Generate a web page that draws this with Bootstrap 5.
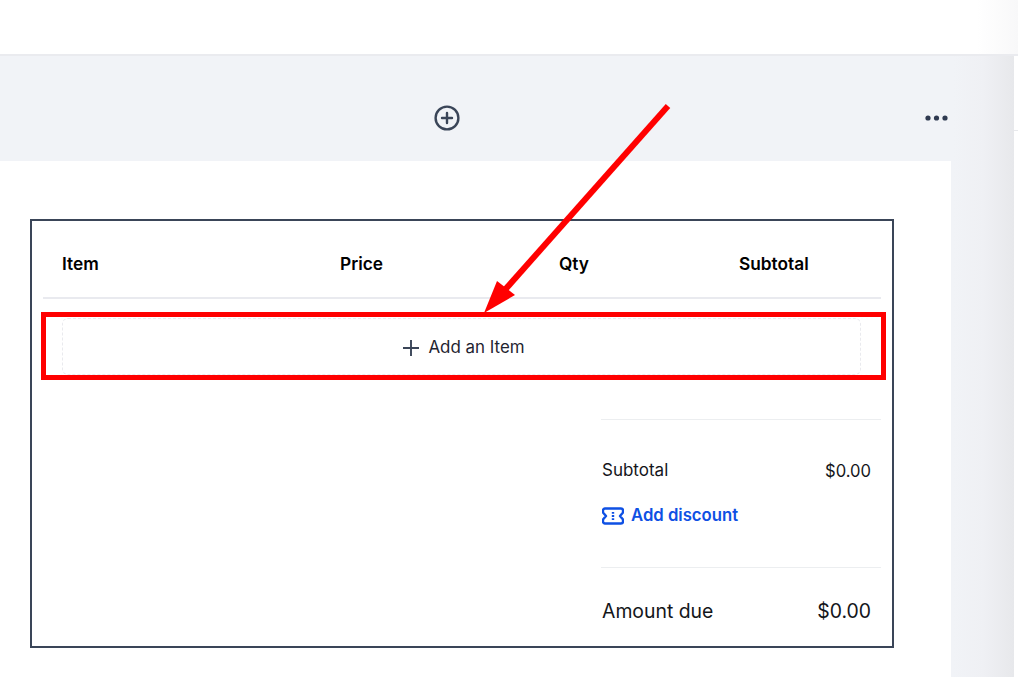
<!DOCTYPE html>
<html lang="en"><head><meta charset="utf-8"><title>Invoice</title>
<link href="https://cdn.jsdelivr.net/npm/bootstrap@5.3.0/dist/css/bootstrap.min.css" rel="stylesheet">
<style>
html,body{height:677px;overflow:hidden;background:#fff}
body{font-family:Inter,"Liberation Sans",sans-serif;color:#14161a;position:relative}
.topstrip{height:56px;background:linear-gradient(90deg,#fff 96%,#f8f8f9 100%);border-bottom:2px solid #eaebef}
.workarea{height:621px}
.mainpane{width:1014px;background:linear-gradient(90deg,#f1f3f7 0,#f1f3f7 94%,#eff0f4 97%,#e7e8eb 100%)}
.sidepane{width:4px;background:#fff}
.sideline{margin-top:74px;height:1px;background:#e8e9ec}
.toolstrip{height:105px;width:951px;position:relative}
.tool-plus{position:absolute;left:434px;top:49px;width:26px;height:26px}
.tool-dots{position:absolute;left:925px;top:59px;width:23px;height:6px}
.paper{width:951px;height:516px;background:#fff;padding:58px 57px 0 30px}
.frame{border:2px solid #3a4558;height:429px;padding:0 11px;background:#fff}
.headrow{display:grid;grid-template-columns:278px 219px 180px 1fr;padding-left:19px;height:78px;border-bottom:2px solid #e9eaef;align-items:center;font-size:17.3px;font-weight:600;color:#000;padding-top:10px;line-height:1.2}
.additem{margin:19px 20px 0 19px;height:57px;border:1px dashed #e9eaee;border-radius:6px;font-size:16.9px;color:#1f2430;gap:9px;padding-top:2px;padding-left:5px;line-height:1.2}
.totals{width:280px;margin-left:558px;margin-top:44px;border-top:1px solid #eceef0;font-size:17px}
.totrow{padding-right:10px;padding-left:1px}
.subt{margin-top:40px;height:22px}
.subt span:last-child{font-size:16.6px}
.disc{margin-top:23px;height:22px;color:#0e50e4;font-weight:600;gap:7px;padding-left:1px;margin-bottom:40px;font-size:16.7px}
.dueblock{border-top:1px solid #eceef0;padding-top:33px}
.due{font-size:19.4px;height:22px}
.redbox{position:absolute;left:41px;top:312px;width:845px;height:68px;border:5px solid #f00}
.arrow{position:absolute;left:470px;top:95px;width:210px;height:225px}
</style></head><body>
<div class="topstrip"></div>
<div class="workarea d-flex">
 <div class="mainpane">
  <div class="toolstrip">
   <svg class="tool-plus" viewBox="0 0 26 26" fill="none" stroke="#3a4558" stroke-width="2.4" stroke-linecap="round"><circle cx="13" cy="13" r="11.4"/><path d="M13 8v10M8 13h10"/></svg>
   <svg class="tool-dots" viewBox="0 0 23 6" fill="#2f3a50"><circle cx="3" cy="3" r="2.6"/><circle cx="11.500" cy="3" r="2.6"/><circle cx="20" cy="3" r="2.6"/></svg>
  </div>
  <div class="paper">
   <div class="frame">
    <div class="headrow"><div>Item</div><div>Price</div><div>Qty</div><div>Subtotal</div></div>
    <div class="additem d-flex align-items-center justify-content-center">
     <svg width="16" height="16" viewBox="0 0 16 16" fill="none" stroke="#3a4558" stroke-width="1.9"><path d="M8 0v16M0 8h16"/></svg>
     <span>Add an Item</span>
    </div>
    <div class="totals">
     <div class="totrow subt d-flex justify-content-between align-items-center"><span>Subtotal</span><span>$0.00</span></div>
     <div class="disc d-flex align-items-center">
      <svg width="22" height="18" viewBox="0 0 22 18" fill="none" stroke="#0e50e4" stroke-width="2.4" stroke-linejoin="round"><path d="M3 1.500h16a2 2 0 0 1 2 2v2l-3 3.500 3 3.500v2a2 2 0 0 1-2 2H3a2 2 0 0 1-2-2v-2l3-3.500-3-3.500v-2a2 2 0 0 1 2-2z"/><path d="M11 5v1.800M11 8.100v1.800M11 11.200v1.800"/></svg>
      <span>Add discount</span>
     </div>
     <div class="dueblock"><div class="totrow due d-flex justify-content-between align-items-center"><span>Amount due</span><span>$0.00</span></div></div>
    </div>
   </div>
  </div>
 </div>
 <div class="sidepane"><div class="sideline"></div></div>
</div>
<div class="redbox"></div>
<svg class="arrow" viewBox="470 95 210 225"><path d="M668 106L503 292" stroke="#f00" stroke-width="6" fill="none"/><polygon points="484,313 497,281 515,295" fill="#f00"/></svg>
</body></html>
